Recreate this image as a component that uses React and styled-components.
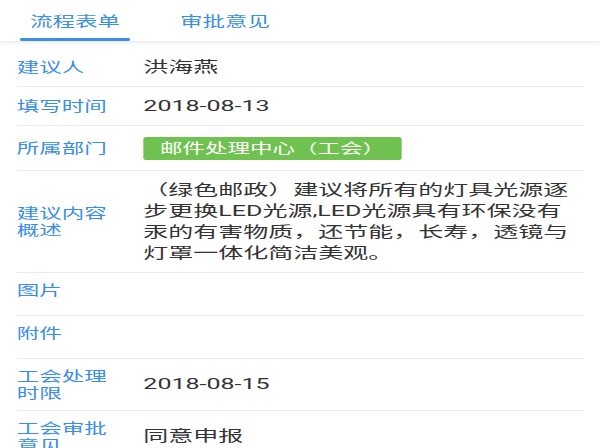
import React from "react";
import styled, { createGlobalStyle } from "styled-components";

const Global = createGlobalStyle`
  html, body {
    margin: 0;
    padding: 0;
    background: #ffffff;
    overflow: hidden;
  }
  body {
    font-family: Roboto, "Noto Sans CJK SC", sans-serif;
  }
`;

const Screen = styled.div`
  width: 360px;
  transform: scaleX(1.66667);
  transform-origin: 0 0;
  background: #fff;
`;

const TabBar = styled.div`
  display: flex;
  height: 41px;
  background: #fff;
  box-shadow: 0 1px 3px rgba(0, 0, 0, 0.12);
`;

const Tab = styled.div`
  width: 25%;
  display: flex;
  flex-direction: column;
`;

const TabText = styled.div`
  flex: 1;
  display: flex;
  align-items: center;
  justify-content: center;
  font-size: 13.5px;
  color: #3a8ee6;
  padding-top: 1px;
`;

const Indicator = styled.div`
  height: 3px;
  margin: 0 12px;
  border-radius: 1px;
  background: ${(p) => (p.$active ? "#3a8ee6" : "transparent")};
`;

const List = styled.div`
  margin-top: 7px;
  padding: 0 10px;
`;

const Row = styled.div`
  display: flex;
  align-items: ${(p) => (p.$top ? "flex-start" : "center")};
  padding: 8.5px 0;
  border-bottom: 1px solid #ebebeb;
`;

const Label = styled.div`
  width: 60px;
  flex-shrink: 0;
  margin-right: 16px;
  font-size: 13.5px;
  line-height: 17px;
  color: #3a8ee6;
`;

const Value = styled.div`
  flex: 1;
  padding-right: 4px;
  font-size: 15px;
  line-height: 21px;
  color: #333;
  min-height: ${(p) => (p.$empty ? "25px" : "0")};
`;

const Tag = styled.span`
  display: inline-flex;
  align-items: center;
  height: 23px;
  margin: 2px 0;
  padding: 0 10px;
  border-radius: 2px;
  background: #70c250;
  color: #fff;
  font-size: 13.5px;
`;

const rows = [
  { label: "建议人", value: "洪海燕" },
  { label: "填写时间", value: "2018-08-13" },
  { label: "所属部门", tag: "邮件处理中心（工会）" },
  {
    label: "建议内容概述",
    value:
      "（绿色邮政）建议将所有的灯具光源逐步更换LED光源,LED光源具有环保没有汞的有害物质，还节能，长寿，透镜与灯罩一体化简洁美观。",
  },
  { label: "图片", empty: true },
  { label: "附件", empty: true },
  { label: "工会处理时限", value: "2018-08-15" },
  { label: "工会审批意见", value: "同意申报" },
];

export default function App() {
  return (
    <>
      <Global />
      <Screen>
        <TabBar>
          <Tab>
            <TabText>流程表单</TabText>
            <Indicator $active />
          </Tab>
          <Tab>
            <TabText>审批意见</TabText>
            <Indicator />
          </Tab>
        </TabBar>
        <List>
          {rows.map((r) => (
            <Row key={r.label} $top={r.empty}>
              <Label>{r.label}</Label>
              <Value $empty={r.empty}>
                {r.tag ? <Tag>{r.tag}</Tag> : r.value}
              </Value>
            </Row>
          ))}
        </List>
      </Screen>
    </>
  );
}
